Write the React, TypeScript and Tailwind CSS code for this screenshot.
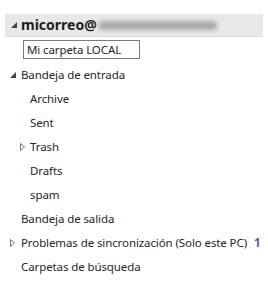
const font = { fontFamily: '"Noto Sans", "Open Sans", sans-serif' }

function Expanded() {
  return (
    <svg width="6" height="6" viewBox="0 0 6 6" className="shrink-0" aria-hidden>
      <path d="M6 0 L6 6 L0 6 Z" fill="#444" />
    </svg>
  )
}

function Collapsed() {
  return (
    <svg width="5" height="8" viewBox="0 0 5 8" className="shrink-0" aria-hidden>
      <path d="M0.5 0.5 L4.5 4 L0.5 7.5 Z" fill="none" stroke="#777" strokeWidth="1" />
    </svg>
  )
}

type Row = { label: string; indent: number; arrow?: 'open' | 'closed'; count?: number }

const rows: Row[] = [
  { label: 'Bandeja de entrada', indent: 0, arrow: 'open' },
  { label: 'Archive', indent: 1 },
  { label: 'Sent', indent: 1 },
  { label: 'Trash', indent: 1, arrow: 'closed' },
  { label: 'Drafts', indent: 1 },
  { label: 'spam', indent: 1 },
  { label: 'Bandeja de salida', indent: 0 },
  { label: 'Problemas de sincronización (Solo este PC)', indent: 0, arrow: 'closed', count: 1 },
  { label: 'Carpetas de búsqueda', indent: 0 },
]

export default function App() {
  return (
    <div className="h-[285px] w-[268px] overflow-hidden bg-white pt-[14px] text-[#262626]" style={font}>
      <div className="mx-[5px] flex h-[23px] items-center border-b border-[#dcdcdc] bg-[#e8e8e8]">
        <span className="ml-[6px] mr-[5px] flex w-[5px] items-center">
          <Expanded />
        </span>
        <span className="text-[14px] font-bold leading-none text-[#1e1e1e]">micorreo@</span>
        <span className="ml-[2px] h-[9px] w-[118px] rounded-sm bg-[#a8a8a8] blur-[2px]" />
      </div>
      <div className="ml-[23px] mt-[3px] flex h-[19px] w-[117px] items-center border border-[#7a7a7a] bg-white pl-[3px] text-[11.5px] leading-none tracking-[-0.1px]">
        Mi carpeta LOCAL
      </div>
      <div className="mt-[4px] flex flex-col">
        {rows.map((row) => (
          <div key={row.label} className="flex h-[24px] items-center text-[11.5px] leading-none tracking-[-0.1px]">
            <span
              className={
                row.indent === 0
                  ? 'ml-[10px] mr-[5px] flex w-[6px] items-center'
                  : 'ml-[20px] mr-[4px] flex w-[6px] items-center'
              }
            >
              {row.arrow === 'open' && <Expanded />}
              {row.arrow === 'closed' && <Collapsed />}
            </span>
            <span className="whitespace-nowrap">{row.label}</span>
            {row.count !== undefined && (
              <span className="ml-[7px] font-bold text-[#3b6a8f]">{row.count}</span>
            )}
          </div>
        ))}
      </div>
    </div>
  )
}
